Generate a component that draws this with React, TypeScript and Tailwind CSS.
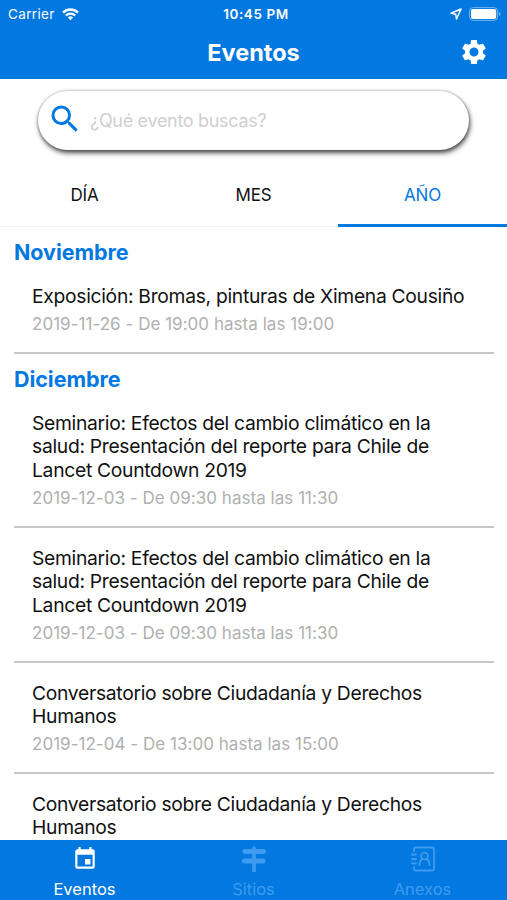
import React from "react";
import { MdSettings, MdSearch, MdEvent } from "react-icons/md";

// types
interface EventItem {
  title: string;
  date?: string;
}

interface Month {
  name: string;
  events: EventItem[];
}

const months: Month[] = [
  {
    name: "Noviembre",
    events: [
      {
        title: "Exposición: Bromas, pinturas de Ximena Cousiño",
        date: "2019-11-26 - De 19:00 hasta las 19:00",
      },
    ],
  },
  {
    name: "Diciembre",
    events: [
      {
        title: "Seminario: Efectos del cambio climático en la salud: Presentación del reporte para Chile de Lancet Countdown 2019",
        date: "2019-12-03 - De 09:30 hasta las 11:30",
      },
      {
        title: "Seminario: Efectos del cambio climático en la salud: Presentación del reporte para Chile de Lancet Countdown 2019",
        date: "2019-12-03 - De 09:30 hasta las 11:30",
      },
      {
        title: "Conversatorio sobre Ciudadanía y Derechos Humanos",
        date: "2019-12-04 - De 13:00 hasta las 15:00",
      },
      {
        title: "Conversatorio sobre Ciudadanía y Derechos Humanos",
      },
    ],
  },
];

// StatusBar
const StatusBar: React.FC = () => (
  <div className="grid h-7 grid-cols-3 items-center pl-2 pr-[6px] text-[13.5px]">
    <div className="flex items-center gap-[7px]">
      <span className="tracking-[0.35px]">Carrier</span>
      <svg width="17" height="13" viewBox="0 0 17 13" fill="none" stroke="currentColor" strokeWidth="2.3">
        <path d="M1 4.600a10.600 10.600 0 0 1 15 0" />
        <path d="M3.800 7.500a6.700 6.700 0 0 1 9.400 0" />
        <path d="M8.500 12.200 5.900 9.600a3.700 3.700 0 0 1 5.200 0z" fill="currentColor" stroke="none" />
      </svg>
    </div>
    <span className="pl-[3px] text-center text-[13.5px] font-semibold tracking-[0.55px] whitespace-nowrap">10:45 PM</span>
    <div className="flex items-center justify-end gap-[7px]">
      <svg width="12" height="12" viewBox="0 0 12 12" fill="none" stroke="currentColor" strokeWidth="1.5" strokeLinejoin="round">
        <path d="M11 1 1 5.200l4.700 1 .8 4.800z" />
      </svg>
      <svg width="32" height="14" viewBox="0 0 32 14">
        <rect x="0.6" y="0.6" width="28" height="12.8" rx="3.6" fill="none" stroke="currentColor" strokeOpacity="0.45" />
        <rect x="2" y="2" width="25.2" height="10" rx="2" fill="currentColor" />
        <path d="M30 5v4q1.500-.6 1.500-2T30 5z" fill="currentColor" fillOpacity="0.5" />
      </svg>
    </div>
  </div>
);

// EventRow
// shows a single event with its separator
const EventRow: React.FC<{ event: EventItem }> = ({ event }) => (
  <div className="border-b-2 border-[#c8c8c8] pb-[17.6px] pl-[18px] pr-5 pt-[19px]">
    <div className="text-[19.3px] leading-[23.4px] tracking-[-0.3px] text-[#111]">{event.title}</div>
    {event.date && (
      <div className="mt-[6px] text-[17px] leading-5 tracking-[0.03px] text-[#b0b0b0]">{event.date}</div>
    )}
  </div>
);

const App: React.FC = () => (
  <div className="flex h-[900px] w-[507px] flex-col overflow-hidden bg-white font-['Inter',sans-serif]">

    {/* header */}
    <header className="h-[79px] shrink-0 bg-[#0278e1] text-white">
      <StatusBar />
      <div className="grid grid-cols-[1fr_auto_1fr] items-center px-[18px] pt-2">
        <h1 className="col-start-2 pt-px text-[23.5px] font-bold leading-8">Eventos</h1>
        <MdSettings className="-mt-px size-[30px] justify-self-end" />
      </div>
    </header>

    {/* search */}
    <div className="shrink-0 px-[38px] pt-3">
      <div className="flex h-[59px] items-center gap-[7px] rounded-full bg-white pl-[9px] pb-[3px] shadow-[0_0_2px_1px_rgba(0,0,0,0.15),1px_3px_5px_rgba(0,0,0,0.7)]">
        <MdSearch className="size-9 text-[#0278e1]" />
        <span className="pt-[3px] text-[18px] tracking-[-0.31px] text-[#cfcfcf]">¿Qué evento buscas?</span>
      </div>
    </div>

    {/* tabs */}
    <div className="mt-3 grid h-[65px] shrink-0 grid-cols-3 text-center text-[17px] leading-[66px] tracking-[-0.2px] text-[#111]">
      <div className="h-[65px] border-b border-[#f2f2f2]">DÍA</div>
      <div className="h-[65px] border-b border-[#f2f2f2]">MES</div>
      <div className="h-[65px] border-b-[3px] border-[#0278e1] text-[#0278e1]">AÑO</div>
    </div>

    {/* event list */}
    <main className="min-h-0 flex-1 overflow-hidden pl-[14px] pr-[13px]">
      {months.map((month) => (
        <section key={month.name}>
          <h2 className="pt-[11px] text-[21.5px] font-bold leading-7 tracking-[-0.05px] text-[#0278e1]">{month.name}</h2>
          {month.events.map((event, i) => (
            <EventRow key={i} event={event} />
          ))}
        </section>
      ))}
    </main>

    {/* bottom navigation */}
    <nav className="grid h-[60px] shrink-0 grid-cols-3 bg-[#0278e1] pt-[6px] text-[16.5px] leading-5 text-white">
      <div className="flex flex-col items-center gap-[7px]">
        <MdEvent className="size-[26px]" />
        <span>Eventos</span>
      </div>
      <div className="flex flex-col items-center gap-[7px] text-[#3f9bef]">
        <svg width="26" height="26" viewBox="0 0 26 26" fill="none" stroke="currentColor" strokeLinecap="round" strokeLinejoin="round">
          <path d="M13 2v23" strokeWidth="3.6" />
          <path d="M4 5.500h18.500M3.500 15h18.500" strokeWidth="5" />
          <path d="M22 4l3 1.500L22 7zM4 13.500l-3 1.500L4 16.500z" fill="currentColor" strokeWidth="1" />
        </svg>
        <span>Sitios</span>
      </div>
      <div className="flex flex-col items-center gap-[7px] text-[#3f9bef]">
        <svg width="26" height="26" viewBox="0 0 26 26" fill="none" stroke="currentColor" strokeWidth="1.8" strokeLinecap="round">
          <path d="M4 5V3q0-1.500 1.500-1.500h17q1.500 0 1.500 1.500v20q0 1.500-1.500 1.500h-17Q4 24.500 4 23v-2" />
          <path d="M2 8.500h4M2 13h4M2 17.500h4" />
          <circle cx="14.5" cy="10" r="3.4" />
          <path d="M9.500 19q0-4.500 3-5.800M19.500 19q0-4.500-3-5.800" />
        </svg>
        <span>Anexos</span>
      </div>
    </nav>

  </div>
);

export default App;
